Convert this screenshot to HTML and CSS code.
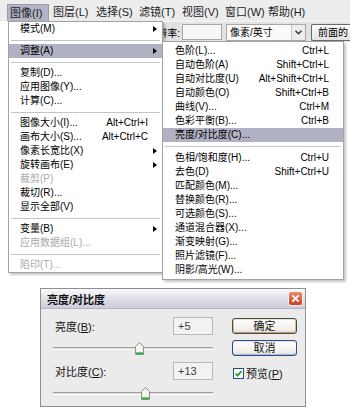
FILE: index.html
```html
<!DOCTYPE html>
<html lang="zh-CN">
<head>
<meta charset="utf-8">
<title>亮度/对比度</title>
<link rel="stylesheet" href="styles.css">
</head>
<body>
<div class="shot">
  <div class="menubar">
    <span class="mb-item open">图像(I)</span>
    <span class="mb-item">图层(L)</span>
    <span class="mb-item">选择(S)</span>
    <span class="mb-item">滤镜(T)</span>
    <span class="mb-item">视图(V)</span>
    <span class="mb-item">窗口(W)</span>
    <span class="mb-item">帮助(H)</span>
  </div>
  <div class="optbar">
    <span class="opt-label">分辨率:</span>
    <span class="opt-input"></span>
    <span class="opt-select">
      <span class="sel-text">像素/英寸</span>
      <span class="sel-btn"><svg width="7" height="5" viewBox="0 0 7 5"><path d="M0.5 0.8 L3.5 3.8 L6.5 0.8" fill="none" stroke="#333" stroke-width="1.4"/></svg></span>
    </span>
    <span class="opt-btn">前面的</span>
  </div>

  <ul class="menu menu-main">
    <li class="mi"><span>模式(M)</span><span></span><span class="arrow"></span></li>
    <li class="sep"></li>
    <li class="mi hl"><span>调整(A)</span><span></span><span class="arrow"></span></li>
    <li class="sep"></li>
    <li class="mi"><span>复制(D)...</span><span></span><span></span></li>
    <li class="mi"><span>应用图像(Y)...</span><span></span><span></span></li>
    <li class="mi"><span>计算(C)...</span><span></span><span></span></li>
    <li class="sep"></li>
    <li class="mi"><span>图像大小(I)...</span><span class="key">Alt+Ctrl+I</span><span></span></li>
    <li class="mi"><span>画布大小(S)...</span><span class="key">Alt+Ctrl+C</span><span></span></li>
    <li class="mi"><span>像素长宽比(X)</span><span></span><span class="arrow"></span></li>
    <li class="mi"><span>旋转画布(E)</span><span></span><span class="arrow"></span></li>
    <li class="mi dis"><span>裁剪(P)</span><span></span><span></span></li>
    <li class="mi"><span>裁切(R)...</span><span></span><span></span></li>
    <li class="mi"><span>显示全部(V)</span><span></span><span></span></li>
    <li class="sep"></li>
    <li class="mi"><span>变量(B)</span><span></span><span class="arrow"></span></li>
    <li class="mi dis"><span>应用数据组(L)...</span><span></span><span></span></li>
    <li class="sep"></li>
    <li class="mi dis"><span>陷印(T)...</span><span></span><span></span></li>
  </ul>

  <ul class="menu menu-sub">
    <li class="mi"><span>色阶(L)...</span><span class="key">Ctrl+L</span></li>
    <li class="mi"><span>自动色阶(A)</span><span class="key">Shift+Ctrl+L</span></li>
    <li class="mi"><span>自动对比度(U)</span><span class="key">Alt+Shift+Ctrl+L</span></li>
    <li class="mi"><span>自动颜色(O)</span><span class="key">Shift+Ctrl+B</span></li>
    <li class="mi"><span>曲线(V)...</span><span class="key">Ctrl+M</span></li>
    <li class="mi"><span>色彩平衡(B)...</span><span class="key">Ctrl+B</span></li>
    <li class="mi hl"><span>亮度/对比度(C)...</span><span class="key"></span></li>
    <li class="sep"></li>
    <li class="mi"><span>色相/饱和度(H)...</span><span class="key">Ctrl+U</span></li>
    <li class="mi"><span>去色(D)</span><span class="key">Shift+Ctrl+U</span></li>
    <li class="mi"><span>匹配颜色(M)...</span><span class="key"></span></li>
    <li class="mi"><span>替换颜色(R)...</span><span class="key"></span></li>
    <li class="mi"><span>可选颜色(S)...</span><span class="key"></span></li>
    <li class="mi"><span>通道混合器(X)...</span><span class="key"></span></li>
    <li class="mi"><span>渐变映射(G)...</span><span class="key"></span></li>
    <li class="mi"><span>照片滤镜(F)...</span><span class="key"></span></li>
    <li class="mi"><span>阴影/高光(W)...</span><span class="key"></span></li>
  </ul>
</div>

<div class="dialog">
  <div class="dlg-title">
    <h1>亮度/对比度</h1>
    <span class="close"><svg width="15" height="15" viewBox="0 0 15 15">
      <defs><linearGradient id="cg" x1="0" y1="0" x2="0" y2="1"><stop offset="0" stop-color="#ee8e70"/><stop offset="1" stop-color="#c63c1a"/></linearGradient></defs>
      <rect x="0.5" y="0.5" width="14" height="14" rx="2.5" fill="url(#cg)" stroke="#f3f3f3"/>
      <path d="M4.3 4.3 L10.7 10.7 M10.7 4.3 L4.3 10.7" stroke="#fff" stroke-width="1.8"/>
    </svg></span>
  </div>
  <div class="dlg-body">
    <div class="dlg-left">
      <div class="frow"><span class="lbl">亮度(<u>B</u>):</span><span class="num">+5</span></div>
      <div class="slider"><span class="track"></span><span class="thumb" style="left:53.8%"><svg width="9" height="13" viewBox="0 0 9 13"><path d="M0.5 4.5 L4.5 0.5 L8.5 4.5 L8.5 12.5 L0.5 12.5 Z" fill="#f5f5f0" stroke="#8c8c8c"/><path d="M1 11.3 H8" stroke="#2fb24a" stroke-width="2"/></svg></span></div>
      <div class="frow row2"><span class="lbl">对比度(<u>C</u>):</span><span class="num">+13</span></div>
      <div class="slider"><span class="track"></span><span class="thumb" style="left:58.1%"><svg width="9" height="13" viewBox="0 0 9 13"><path d="M0.5 4.5 L4.5 0.5 L8.5 4.5 L8.5 12.5 L0.5 12.5 Z" fill="#f5f5f0" stroke="#8c8c8c"/><path d="M1 11.3 H8" stroke="#2fb24a" stroke-width="2"/></svg></span></div>
    </div>
    <div class="dlg-right">
      <span class="btn default">确定</span>
      <span class="btn cancel">取消</span>
      <span class="check"><span class="box"><svg width="9" height="9" viewBox="0 0 9 9"><path d="M1.5 4.5 L3.5 6.6 L7.6 2" fill="none" stroke="#21a121" stroke-width="1.8"/></svg></span><span>预览(<u>P</u>)</span></span>
    </div>
  </div>
</div>
</body>
</html>
```

FILE: styles.css
```css
* { box-sizing: border-box; margin: 0; padding: 0; }

html, body {
  width: 350px;
  height: 416px;
  overflow: hidden;
  background: #fff;
}

body {
  font-family: "Liberation Sans", "Noto Sans CJK SC", sans-serif;
  font-size: 10px;
  color: #000;
}

.shot {
  position: relative;
  height: 288px;
}

/* menubar */
.menubar {
  display: flex;
  height: 21px;
  padding: 4px 0 0 7px;
  background: #ececec;
}

.mb-item {
  flex: none;
  width: 43px;
  height: 17px;
  padding-left: 3px;
  font-size: 11px;
  line-height: 16px;
  color: #1c1c1c;
  white-space: nowrap;
}

.mb-item.open {
  width: 42px;
  margin-right: 1px;
  padding-left: 2px;
  background: #b2b4c6;
  border: 1px solid #9a9cae;
  border-bottom: none;
}

/* options bar */
.optbar {
  display: flex;
  align-items: center;
  height: 21px;
  margin-left: 8px;
  background: #e2e2e2;
  border-top: 1px solid #f6f6f6;
}

.optbar > * { flex: none; }

.opt-label {
  width: 172px;
  text-align: right;
}

.opt-input {
  margin-left: 2px;
  width: 40px;
  height: 16px;
  background: #f7f7f7;
  border: 1px solid #a8a8a8;
}

.opt-select {
  display: flex;
  margin-left: 4px;
  width: 80px;
  height: 17px;
  background: #fafafa;
  border: 1px solid #a8a8a8;
}

.sel-text {
  flex: 1;
  padding-left: 3px;
  line-height: 15px;
  white-space: nowrap;
}

.sel-btn {
  width: 14px;
  display: flex;
  align-items: center;
  justify-content: center;
  background: #ededed;
  border-left: 1px solid #c8c8c8;
}

.opt-btn {
  margin-left: 5px;
  width: 39px;
  height: 17px;
  padding-left: 6px;
  line-height: 15px;
  white-space: nowrap;
  overflow: hidden;
  border: 1px solid #6a6a6a;
  border-right: none;
  border-radius: 2px 0 0 2px;
  background: linear-gradient(#fdfdfd, #e2e2e2);
}

/* menus */
.menu {
  position: absolute;
  list-style: none;
  background: #fff;
  border: 1px solid #a2a2a2;
  box-shadow: 2px 2px 2px rgba(0, 0, 0, 0.22);
}

.menu-main {
  left: 8px;
  top: 21px;
  width: 155px;
}

.menu-sub {
  left: 162px;
  top: 41px;
  width: 182px;
  padding: 2px 0;
}

.mi {
  display: grid;
  height: 14px;
  line-height: 14px;
  white-space: nowrap;
}

.menu-main .mi {
  grid-template-columns: 1fr auto 14px;
  padding-left: 11px;
}

.menu-sub .mi {
  grid-template-columns: 1fr auto;
  padding: 0 14px 0 12px;
}

.mi.hl { background: #b0b2c4; }
.mi.dis { color: #a9a9a9; }

.arrow {
  align-self: center;
  justify-self: start;
  margin-left: 5px;
  width: 0;
  height: 0;
  border-left: 4px solid #000;
  border-top: 3.5px solid transparent;
  border-bottom: 3.5px solid transparent;
}

.sep {
  display: flex;
  align-items: center;
  height: 8px;
  padding: 0 2px;
}

.menu-sub .sep { height: 9px; }

.sep::before {
  content: "";
  flex: 1;
  height: 1px;
  background: #c4c4c4;
}

/* dialog */
.dialog {
  margin-left: 40px;
  width: 266px;
  background: #ebebeb;
  border: 1px solid #8e8e9a;
}

.dlg-title {
  display: flex;
  align-items: center;
  justify-content: space-between;
  height: 20px;
  padding: 0 2px 0 6px;
  background: linear-gradient(#fbfbfd, #e2e2ea 45%, #cdcdd9);
  border-bottom: 1px solid #b4b4c0;
}

.dlg-title h1 {
  font-size: 11px;
  font-weight: bold;
  color: #111;
}

.close {
  display: flex;
  width: 15px;
  height: 15px;
}

.dlg-body {
  display: flex;
  padding: 8px 0 6px 14px;
  font-size: 11px;
}

.dlg-left {
  width: 158px;
}

.frow {
  display: flex;
  align-items: center;
  justify-content: space-between;
  height: 18px;
}

.row2 { margin-top: 7px; }

.lbl { color: #111; }

.num {
  width: 40px;
  height: 18px;
  padding-left: 4px;
  line-height: 16px;
  color: #444;
  background: #f2f2f2;
  border: 1px solid #b9b9b9;
}

.slider {
  position: relative;
  width: 160px;
  height: 13px;
  margin: 7px 0 0 -2px;
}

.track {
  position: absolute;
  left: 0;
  right: 0;
  top: 5px;
  height: 3px;
  background: #dcdcdc;
  border-top: 1px solid #9e9e9e;
  border-bottom: 1px solid #fff;
}

.thumb {
  position: absolute;
  top: 0;
  width: 9px;
  height: 13px;
  margin-left: -4.5px;
  display: flex;
}

.dlg-right {
  display: flex;
  flex-direction: column;
  margin-left: 19px;
  width: 65px;
}

.btn {
  display: block;
  width: 65px;
  height: 16px;
  line-height: 14px;
  text-align: center;
  color: #111;
  border: 1px solid #2c4c7c;
  border-radius: 3px;
  background: linear-gradient(#ffffff, #efeee9 80%, #d8d3c8);
}

.btn.default {
  margin-top: 1px;
  box-shadow: inset 0 1px 0 #fbe3a0, inset 1px 0 0 #f2c050, inset -1px 0 0 #f2c050, inset 0 -1px 0 #e59a30;
}

.btn.cancel {
  margin-top: 6px;
  box-shadow: inset 0 1px 0 #dce6f6, inset 0 -1px 0 #a9bde0;
}

.check {
  display: flex;
  align-items: center;
  gap: 2px;
  margin-top: 11px;
  margin-left: 1px;
  height: 12px;
  color: #111;
}

.box {
  display: flex;
  align-items: center;
  justify-content: center;
  width: 11px;
  height: 11px;
  background: #fff;
  border: 1px solid #1d5282;
}
```
